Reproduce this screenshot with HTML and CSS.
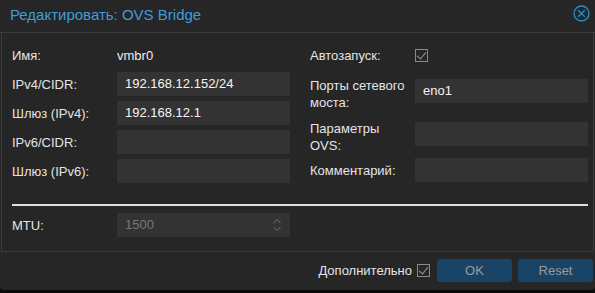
FILE: index.html
```html
<!DOCTYPE html>
<html lang="ru">
<head>
    <meta charset="UTF-8">
    <title>Редактировать: OVS Bridge</title>
    <link rel="stylesheet" href="styles.css">
</head>
<body>
    <div class="dialog">
        <div class="header">
            <span class="title">Редактировать: OVS Bridge</span>
            <svg class="close" width="17" height="17" viewBox="0 0 17 17">
                <circle cx="8.5" cy="8.5" r="7.5" fill="none" stroke="#2b8ccc" stroke-width="1.3"/>
                <path d="M5.2 5.2 L11.8 11.8 M11.8 5.2 L5.2 11.8" stroke="#2b8ccc" stroke-width="1.3"/>
            </svg>
        </div>
        <div class="panel">
            <div class="columns">
                <div class="column">
                    <div class="row"><label>Имя:</label><span class="value">vmbr0</span></div>
                    <div class="row"><label>IPv4/CIDR:</label><div class="field">192.168.12.152/24</div></div>
                    <div class="row"><label>Шлюз (IPv4):</label><div class="field">192.168.12.1</div></div>
                    <div class="row"><label>IPv6/CIDR:</label><div class="field"></div></div>
                    <div class="row"><label>Шлюз (IPv6):</label><div class="field"></div></div>
                </div>
                <div class="column">
                    <div class="row"><label>Автозапуск:</label><span class="check"></span></div>
                    <div class="row tall ports"><label>Порты сетевого моста:</label><div class="field">eno1</div></div>
                    <div class="row tall ovs"><label>Параметры OVS:</label><div class="field"></div></div>
                    <div class="row comment"><label>Комментарий:</label><div class="field"></div></div>
                </div>
            </div>
            <div class="separator"></div>
            <div class="row mtu">
                <label>MTU:</label>
                <div class="field disabled">1500
                    <svg class="spin" width="10" height="16" viewBox="0 0 10 16">
                        <path d="M1.5 6 L5 2.5 L8.5 6 M1.5 10 L5 13.5 L8.5 10" fill="none" stroke="#5a5a5a" stroke-width="1.2"/>
                    </svg>
                </div>
            </div>
        </div>
        <div class="footer">
            <span class="advanced">Дополнительно</span>
            <span class="check"></span>
            <button class="btn ok">OK</button>
            <button class="btn">Reset</button>
        </div>
    </div>
</body>
</html>
```

FILE: styles.css
```css
body {
    margin: 0;
    background-color: #0b0b0b;
    font-family: "Liberation Sans", Arial, sans-serif;
    font-size: 13px;
    color: #e4e4e4;
}
.dialog {
    width: 595px;
    height: 290px;
    background-color: #262626;
    border-radius: 0 0 4px 4px;
    display: flex;
    flex-direction: column;
}
.header {
    height: 32px;
    border-bottom: 1px solid #3c3c3c;
    display: flex;
    align-items: center;
    justify-content: space-between;
    padding: 0 5px 0 10px;
    box-sizing: border-box;
    height: 33px;
}
.title {
    color: #3d9ddc;
    font-size: 15px;
    margin-top: -3px;
}
.close {
    margin-top: -5px;
}
.panel {
    margin: 0 1px;
    border: 1px solid #3c3c3c;
    border-top: none;
    padding: 10px 5px 14px 10px;
    height: 219px;
    box-sizing: border-box;
}
.columns {
    display: grid;
    grid-template-columns: 278px 278px;
    column-gap: 20px;
}
.column {
    display: flex;
    flex-direction: column;
    gap: 5px;
}
.row {
    display: flex;
    align-items: center;
    height: 24px;
}
.row label {
    width: 105px;
    flex-shrink: 0;
}
.value {
    color: #eeeeee;
}
.field {
    width: 173px;
    height: 24px;
    background-color: #333333;
    color: #f4f4f4;
    padding-left: 8px;
    box-sizing: border-box;
    line-height: 24px;
    position: relative;
}
.row.tall {
    height: auto;
    align-items: flex-start;
}
.row.tall label {
    line-height: 17px;
    width: 95px;
    margin-right: 10px;
}
.row.tall .field {
    margin-top: 2px;
}
.ports {
    margin-top: 5px;
}
.ovs {
    margin-top: 4px;
}
.comment {
    margin-top: -1px;
}
.check {
    width: 11px;
    height: 11px;
    border: 1px solid #8a8a8a;
    position: relative;
}
.check::after {
    content: "";
    position: absolute;
    left: 3px;
    top: 0;
    width: 4px;
    height: 8px;
    border-right: 1.5px solid #9a9a9a;
    border-bottom: 1.5px solid #9a9a9a;
    transform: rotate(40deg);
}
.separator {
    height: 2px;
    background-color: #dedede;
    margin: 21px 0 7px 0;
    width: 576px;
}
.mtu .field {
    color: #777777;
}
.spin {
    position: absolute;
    right: 8px;
    top: 4px;
}
.footer {
    flex: 1;
    display: flex;
    align-items: center;
    justify-content: flex-end;
    padding: 0 2px 1px 0;
}
.advanced {
    margin-right: 5px;
    color: #e4e4e4;
}
.footer .check {
    margin-right: 7px;
}
.btn {
    width: 75px;
    height: 23px;
    background-color: #1a4466;
    border: none;
    border-radius: 3px;
    color: #9a9a9a;
    font-family: "Liberation Sans", Arial, sans-serif;
    font-size: 13px;
    padding: 0;
}
.btn.ok {
    margin-right: 6px;
}
```
